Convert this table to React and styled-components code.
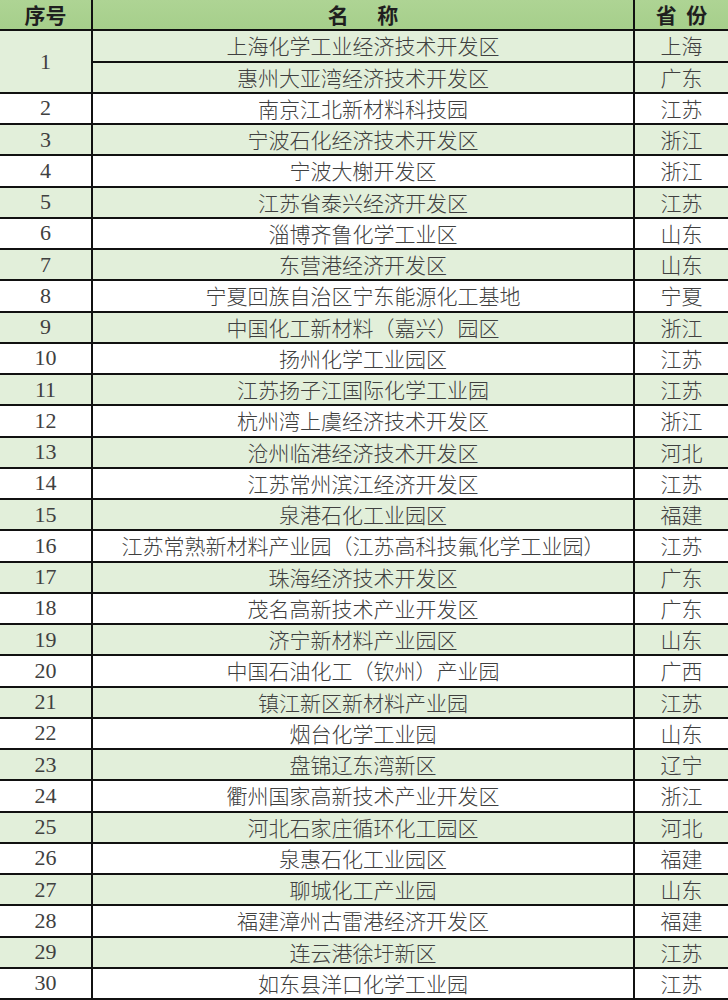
import React from "react";
import styled, { createGlobalStyle } from "styled-components";

const GlobalStyle = createGlobalStyle`
  body {
    margin: 0;
    background: #ffffff;
  }
`;

const Table = styled.div`
  width: 728px;
  display: grid;
  grid-template-columns: 91px 1fr 93px;
  grid-auto-rows: 29.25px;
  gap: 2px;
  padding-bottom: 2px;
  background: #111;
`;

const Cell = styled.div`
  display: flex;
  align-items: center;
  justify-content: center;
  background: ${({ $shade }) => ($shade ? "#e2efda" : "#ffffff")};
  color: #404040;
  font-family: "Noto Sans CJK SC", sans-serif;
  font-weight: 300;
  font-size: 21px;
  line-height: 1;
  white-space: nowrap;
  ${({ $span }) => ($span ? `grid-row: span ${$span};` : "")}
`;

const NumCell = styled(Cell)`
  font-family: "Liberation Serif", "Noto Sans CJK SC", serif;
  font-weight: 400;
  font-size: 22px;
`;

const HeadCell = styled.div`
  display: flex;
  align-items: center;
  justify-content: center;
  background: linear-gradient(#aed494, #a6cf8b);
  color: #1f1f1f;
  font-family: "Noto Sans CJK SC", sans-serif;
  font-weight: 700;
  font-size: 21px;
  line-height: 1;
  white-space: pre;
`;

const rows = [
  [2, "南京江北新材料科技园", "江苏"],
  [3, "宁波石化经济技术开发区", "浙江"],
  [4, "宁波大榭开发区", "浙江"],
  [5, "江苏省泰兴经济开发区", "江苏"],
  [6, "淄博齐鲁化学工业区", "山东"],
  [7, "东营港经济开发区", "山东"],
  [8, "宁夏回族自治区宁东能源化工基地", "宁夏"],
  [9, "中国化工新材料（嘉兴）园区", "浙江"],
  [10, "扬州化学工业园区", "江苏"],
  [11, "江苏扬子江国际化学工业园", "江苏"],
  [12, "杭州湾上虞经济技术开发区", "浙江"],
  [13, "沧州临港经济技术开发区", "河北"],
  [14, "江苏常州滨江经济开发区", "江苏"],
  [15, "泉港石化工业园区", "福建"],
  [16, "江苏常熟新材料产业园（江苏高科技氟化学工业园）", "江苏"],
  [17, "珠海经济技术开发区", "广东"],
  [18, "茂名高新技术产业开发区", "广东"],
  [19, "济宁新材料产业园区", "山东"],
  [20, "中国石油化工（钦州）产业园", "广西"],
  [21, "镇江新区新材料产业园", "江苏"],
  [22, "烟台化学工业园", "山东"],
  [23, "盘锦辽东湾新区", "辽宁"],
  [24, "衢州国家高新技术产业开发区", "浙江"],
  [25, "河北石家庄循环化工园区", "河北"],
  [26, "泉惠石化工业园区", "福建"],
  [27, "聊城化工产业园", "山东"],
  [28, "福建漳州古雷港经济开发区", "福建"],
  [29, "连云港徐圩新区", "江苏"],
  [30, "如东县洋口化学工业园", "江苏"],
];

const App = () => {
  return (
    <>
      <GlobalStyle />
      <Table>
        <HeadCell>序号</HeadCell>
        <HeadCell>{"名      称"}</HeadCell>
        <HeadCell>{"省  份"}</HeadCell>

        <NumCell $shade $span={2}>1</NumCell>
        <Cell $shade>上海化学工业经济技术开发区</Cell>
        <Cell $shade>上海</Cell>
        <Cell $shade>惠州大亚湾经济技术开发区</Cell>
        <Cell $shade>广东</Cell>

        {rows.map(([n, name, prov]) => {
          const shade = n % 2 === 1;
          return (
            <React.Fragment key={n}>
              <NumCell $shade={shade}>{n}</NumCell>
              <Cell $shade={shade}>{name}</Cell>
              <Cell $shade={shade}>{prov}</Cell>
            </React.Fragment>
          );
        })}
      </Table>
    </>
  );
};

export default App;
